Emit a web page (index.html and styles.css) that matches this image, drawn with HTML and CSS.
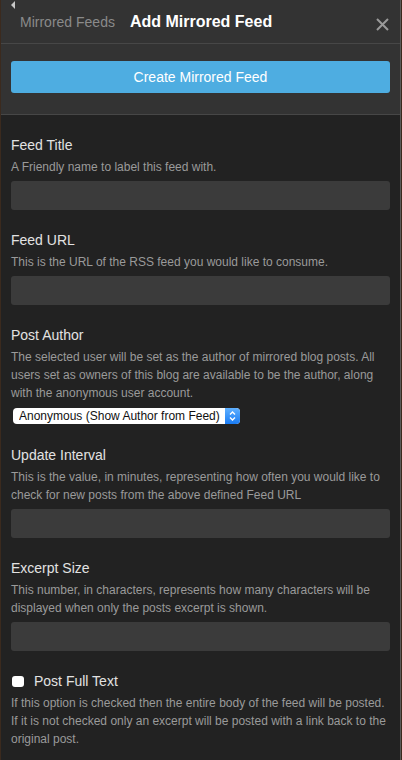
FILE: index.html
```html
<!DOCTYPE html>
<html lang="en">
<head>
    <meta charset="UTF-8" />
    <meta name="viewport" content="width=device-width, initial-scale=1" />
    <title>Add Mirrored Feed</title>
    <link rel="stylesheet" href="styles.css">
</head>
<body>
    <div class="panel">
        <header class="panel-header">
            <span class="back-arrow"></span>
            <a class="crumb" href="#">Mirrored Feeds</a>
            <h1 class="title">Add Mirrored Feed</h1>
            <button class="close" aria-label="Close">
                <svg width="13" height="13" viewBox="0 0 13 13"><path d="M1 1L12 12M12 1L1 12" stroke="#9a9a9a" stroke-width="2" fill="none"/></svg>
            </button>
        </header>
        <div class="actions">
            <button class="primary">Create Mirrored Feed</button>
        </div>
        <form class="form">
            <div class="field">
                <label class="label" for="feed-title">Feed Title</label>
                <p class="desc">A Friendly name to label this feed with.</p>
                <input class="text" type="text" id="feed-title" />
            </div>
            <div class="field">
                <label class="label" for="feed-url">Feed URL</label>
                <p class="desc">This is the URL of the RSS feed you would like to consume.</p>
                <input class="text" type="text" id="feed-url" />
            </div>
            <div class="field">
                <label class="label" for="post-author">Post Author</label>
                <p class="desc">The selected user will be set as the author of mirrored blog posts. All users set as owners of this blog are available to be the author, along with the anonymous user account.</p>
                <span class="select-wrap">
                    <select id="post-author">
                        <option>Anonymous (Show Author from Feed)</option>
                    </select>
                    <span class="stepper">
                        <svg width="15" height="16" viewBox="0 0 15 16"><path d="M5 6.5L7.5 4L10 6.5M5 9.5L7.5 12L10 9.5" stroke="#fff" stroke-width="1.4" fill="none"/></svg>
                    </span>
                </span>
            </div>
            <div class="field">
                <label class="label" for="interval">Update Interval</label>
                <p class="desc">This is the value, in minutes, representing how often you would like to check for new posts from the above defined Feed URL</p>
                <input class="text" type="text" id="interval" />
            </div>
            <div class="field">
                <label class="label" for="excerpt">Excerpt Size</label>
                <p class="desc">This number, in characters, represents how many characters will be displayed when only the posts excerpt is shown.</p>
                <input class="text" type="text" id="excerpt" />
            </div>
            <div class="field">
                <label class="label check-label"><input class="check" type="checkbox" /> Post Full Text</label>
                <p class="desc">If this option is checked then the entire body of the feed will be posted. If it is not checked only an excerpt will be posted with a link back to the original post.</p>
            </div>
        </form>
    </div>
</body>
</html>
```
FILE: styles.css
```css
* { box-sizing: border-box; }
body { margin: 0; background: #3b2a1e; font-family: "Liberation Sans", Arial, sans-serif; }
.panel { margin-left: 1px; width: 400px; min-height: 100vh; background: #222; border-right: 1px solid #5a5a5a; }

.panel-header { position: relative; display: flex; align-items: flex-start; height: 44px; padding: 12px 11px 0 19px; background: #333; border-bottom: 1px solid #474747; }
.back-arrow { position: absolute; left: 10px; top: 1px; width: 0; height: 0; border-top: 4px solid transparent; border-bottom: 4px solid transparent; border-right: 4px solid #c8c8c8; }
.crumb { font-size: 14px; line-height: 20px; color: #8a8a8a; text-decoration: none; }
.title { margin: 0 0 0 15px; font-size: 16px; line-height: 20px; font-weight: bold; color: #fff; }
.close { margin: 6px 0 0 auto; padding: 0; width: 13px; height: 13px; border: 0; background: none; line-height: 0; }

.actions { padding: 17px 10px 21px 10px; background: #333; border-bottom: 1px solid #474747; }
.primary { display: block; width: 100%; height: 32px; border: 0; border-radius: 3px; background: #4eade1; color: #fff; font-family: inherit; font-size: 14px; }

.form { display: flex; flex-direction: column; gap: 21px; padding: 21px 10px 20px 10px; }
.field { display: flex; flex-direction: column; }
.label { font-size: 14px; line-height: 18px; color: #e2e2e2; }
.desc { margin: 4px 0 0; font-size: 12px; line-height: 18px; color: #9a9a9a; }
.text { margin-top: 5px; height: 29px; border: 0; border-radius: 3px; background: #3b3b3b; color: #ddd; }

.select-wrap { position: relative; align-self: flex-start; margin: 6px 0 1px 2px; height: 16px; }
.select-wrap select { display: block; width: 227px; height: 16px; padding: 0 18px 0 6px; border: 0; border-radius: 4px; background: #fff; color: #111; font-family: inherit; font-size: 12px; appearance: none; -webkit-appearance: none; }
.stepper { position: absolute; right: 0; top: 0; width: 15px; height: 16px; border-radius: 0 4px 4px 0; background: linear-gradient(#5fb0ff, #1a7cf4); line-height: 0; }

.check-label { display: flex; align-items: center; }
.check { margin: 0 10px 0 1px; width: 12px; height: 11px; border-radius: 3px; background: #fff; appearance: none; -webkit-appearance: none; }
```
